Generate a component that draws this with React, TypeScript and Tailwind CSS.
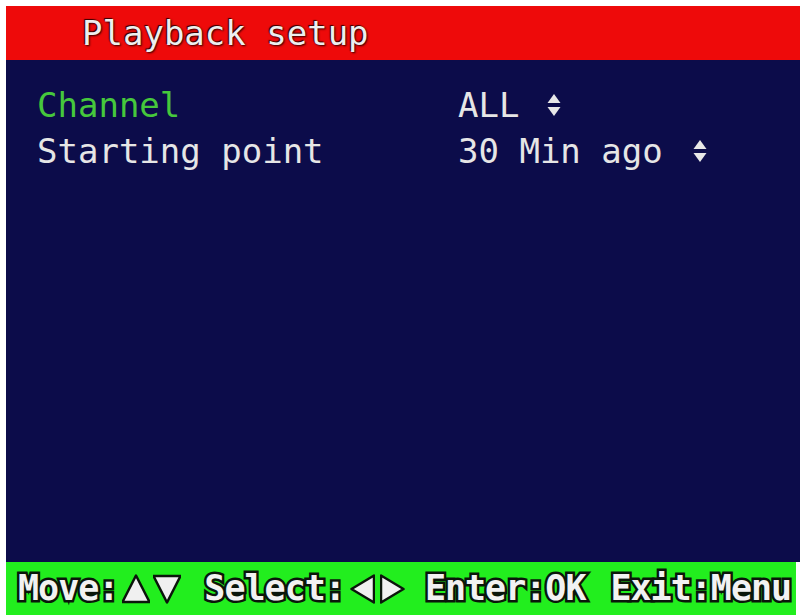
const mono = "font-['DejaVu_Sans_Mono',monospace]";

const UpDown = () => (
  <svg width="14" height="24" viewBox="0 0 14 24" className="inline-block">
    <path d="M7 1 L13.5 10 L0.5 10 Z" fill="#e8e8e8" />
    <path d="M0.5 14 L13.5 14 L7 23 Z" fill="#e8e8e8" />
  </svg>
);

const Tri = ({ dir, className }: { dir: "up" | "down" | "left" | "right"; className?: string }) => {
  const d = {
    up: "M14 1.5 L27.5 28 L0.5 28 Z",
    down: "M0.5 2 L27.5 2 L14 28.5 Z",
    left: "M1.5 15 L24 1.5 L24 28.5 Z",
    right: "M1 1.5 L23.5 15 L1 28.5 Z",
  }[dir];
  const vertical = dir === "up" || dir === "down";
  return (
    <svg
      width={vertical ? 28 : 25}
      height="30"
      viewBox={vertical ? "0 0 28 30" : "0 0 25 30"}
      className={`inline-block shrink-0 ${className ?? ""}`}
    >
      <path d={d} fill="#f0f0f0" stroke="#0b150b" strokeWidth="2.5" strokeLinejoin="round" />
    </svg>
  );
};

const outline = "[paint-order:stroke_fill] [-webkit-text-stroke:5px_#0a160a]";

const App = () => {
  return (
    <div className="w-[803px] h-[615px] bg-white pt-[6px] pl-[6px] pr-[3px] flex flex-col">
      <div className={`h-[54px] bg-[#ee0a0a] flex items-center pl-[76px] ${mono}`}>
        <span className="text-[34px] text-[#eeeeee] [text-shadow:1px_1px_2px_#300,-1px_-1px_1px_#300]">
          Playback setup
        </span>
      </div>

      <div className={`flex-1 bg-[#0c0c4a] pt-[22px] pl-[31px] ${mono}`}>
        <div className="flex items-center h-[46px] text-[34px]">
          <span className="w-[421px] text-[#46c83c]">Channel</span>
          <span className="text-[#e6e6e6] flex items-center gap-[28px]">
            ALL <UpDown />
          </span>
        </div>
        <div className="flex items-center h-[46px] text-[34px]">
          <span className="w-[421px] text-[#e6e6e6]">Starting point</span>
          <span className="text-[#e6e6e6] flex items-center gap-[30px]">
            30 Min ago <UpDown />
          </span>
        </div>
      </div>

      <div className={`h-[53px] bg-[#22ee1e] flex items-center pl-[12px] mr-[4px] ${mono} font-bold text-[35px] tracking-[-1px] text-[#f2f2f2]`}>
        <span className={outline}>Move:</span>
        <Tri dir="up" className="ml-[4px]" />
        <Tri dir="down" className="ml-[3px]" />
        <span className={`ml-[23px] ${outline}`}>Select:</span>
        <Tri dir="left" className="ml-[5px]" />
        <Tri dir="right" className="ml-[5px]" />
        <span className={`ml-[20px] ${outline}`}>Enter:OK</span>
        <span className={`ml-[25px] ${outline}`}>Exit:Menu</span>
      </div>
    </div>
  );
};

export default App;
